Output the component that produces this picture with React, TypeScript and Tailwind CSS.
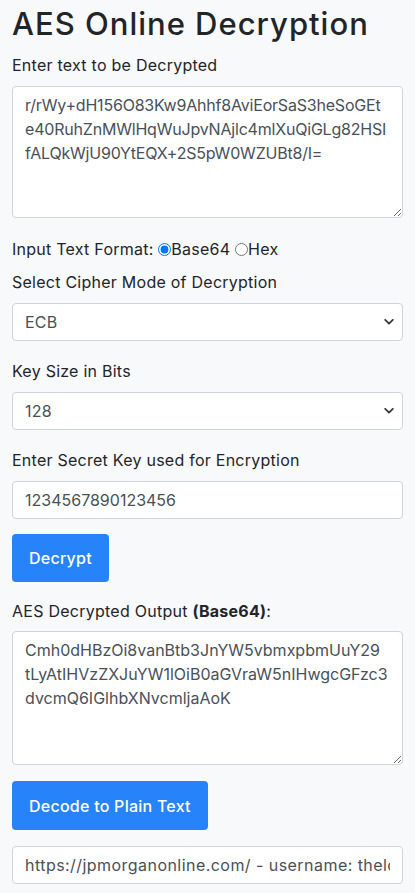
import React, { useState } from "react";

// line breaks placed where the original page wraps them
const CIPHER_TEXT =
  "r/rWy+dH156O83Kw9Ahhf8AviEorSaS3heSoGEt\ne40RuhZnMWlHqWuJpvNAjlc4mlXuQiGLg82HSI\nfALQkWjU90YtEQX+2S5pW0WZUBt8/I=";

const OUTPUT_TEXT =
  "Cmh0dHBzOi8vanBtb3JnYW5vbmxpbmUuY29\ntLyAtIHVzZXJuYW1lOiB0aGVraW5nIHwgcGFzc3\ndvcmQ6IGlhbXNvcmljaAoK";

const PLAIN_TEXT =
  "https://jpmorganonline.com/ - username: thelondonbanker | password: iamsorich";

const Chevron = () => (
  <svg
    className="pointer-events-none absolute right-[9px] top-1/2 -translate-y-1/2"
    width="10"
    height="7"
    viewBox="0 0 10 7"
    fill="none"
  >
    <path d="M1.2 1.3 5 5.1l3.8-3.8" stroke="#343a40" strokeWidth="1.8" strokeLinecap="round" strokeLinejoin="round" />
  </svg>
);

const Select = ({ value, options }: { value: string; options: string[] }) => (
  <div className="relative">
    <select
      defaultValue={value}
      className="block h-[38px] w-full appearance-none rounded-[4px] border border-[#ced4da] bg-white pl-3 pr-8 text-base leading-6 text-[#495057] outline-none"
    >
      {options.map((o) => (
        <option key={o} value={o}>
          {o}
        </option>
      ))}
    </select>
    <Chevron />
  </div>
);

export default function App() {
  const [format, setFormat] = useState("base64");

  return (
    <div className="min-h-[893px] bg-[#f8f9fa] px-3 pt-[6px] font-['Inter',sans-serif] text-[#212529] tracking-[0.25px]">
      <h1 className="mb-[11px] h-9 text-[31px] font-medium leading-[36px] tracking-[1px]">AES Online Decryption</h1>

      <label className="mb-[9px] block h-6 text-base leading-6">Enter text to be Decrypted</label>
      <textarea
        defaultValue={CIPHER_TEXT}
        spellCheck={false}
        className="mb-[19px] block h-[132px] w-full rounded-[4px] border border-[#ced4da] bg-white px-3 py-1.5 text-base leading-6 tracking-[-0.2px] text-[#495057] outline-none"
      />

      <div className="mb-[9px] flex h-6 items-center whitespace-pre text-base leading-6">
        <span>Input Text Format: </span>
        <input
          type="radio"
          name="fmt"
          checked={format === "base64"}
          onChange={() => setFormat("base64")}
          className="m-0 h-[13px] w-[13px]"
        />
        <span>Base64 </span>
        <input
          type="radio"
          name="fmt"
          checked={format === "hex"}
          onChange={() => setFormat("hex")}
          className="m-0 h-[13px] w-[13px]"
        />
        <span>Hex</span>
      </div>

      <label className="mb-[9px] block h-6 text-base leading-6">Select Cipher Mode of Decryption</label>
      <div className="mb-[18px]">
        <Select value="ECB" options={["ECB", "CBC"]} />
      </div>

      <label className="mb-[9px] block h-6 text-base leading-6">Key Size in Bits</label>
      <div className="mb-[18px]">
        <Select value="128" options={["128", "192", "256"]} />
      </div>

      <label className="mb-[9px] block h-6 text-base leading-6">Enter Secret Key used for Encryption</label>
      <input
        type="text"
        defaultValue="1234567890123456"
        className="mb-[15px] block h-[38px] w-full rounded-[4px] border border-[#ced4da] bg-white px-3 text-base leading-6 tracking-normal text-[#495057] outline-none"
      />

      <button className="mb-[17px] block h-12 rounded-[4px] bg-[#2783fa] px-[17px] text-base font-medium leading-6 text-white">
        Decrypt
      </button>

      <label className="mb-2 block h-6 text-base leading-6">
        AES Decrypted Output <span className="font-bold">(Base64)</span>:
      </label>
      <textarea
        defaultValue={OUTPUT_TEXT}
        spellCheck={false}
        className="mb-4 block h-[134px] w-full rounded-[4px] border border-[#ced4da] bg-white px-3 py-1.5 text-base leading-6 tracking-normal text-[#495057] outline-none"
      />

      <button className="mb-4 block h-[49px] rounded-[4px] bg-[#2783fa] px-[17px] text-base font-medium leading-6 text-white">
        Decode to Plain Text
      </button>

      <input
        type="text"
        defaultValue={PLAIN_TEXT}
        className="block h-[38px] w-full rounded-[4px] border border-[#ced4da] bg-white px-3 text-base leading-6 tracking-[0.45px] text-[#495057] outline-none"
      />
    </div>
  );
}
